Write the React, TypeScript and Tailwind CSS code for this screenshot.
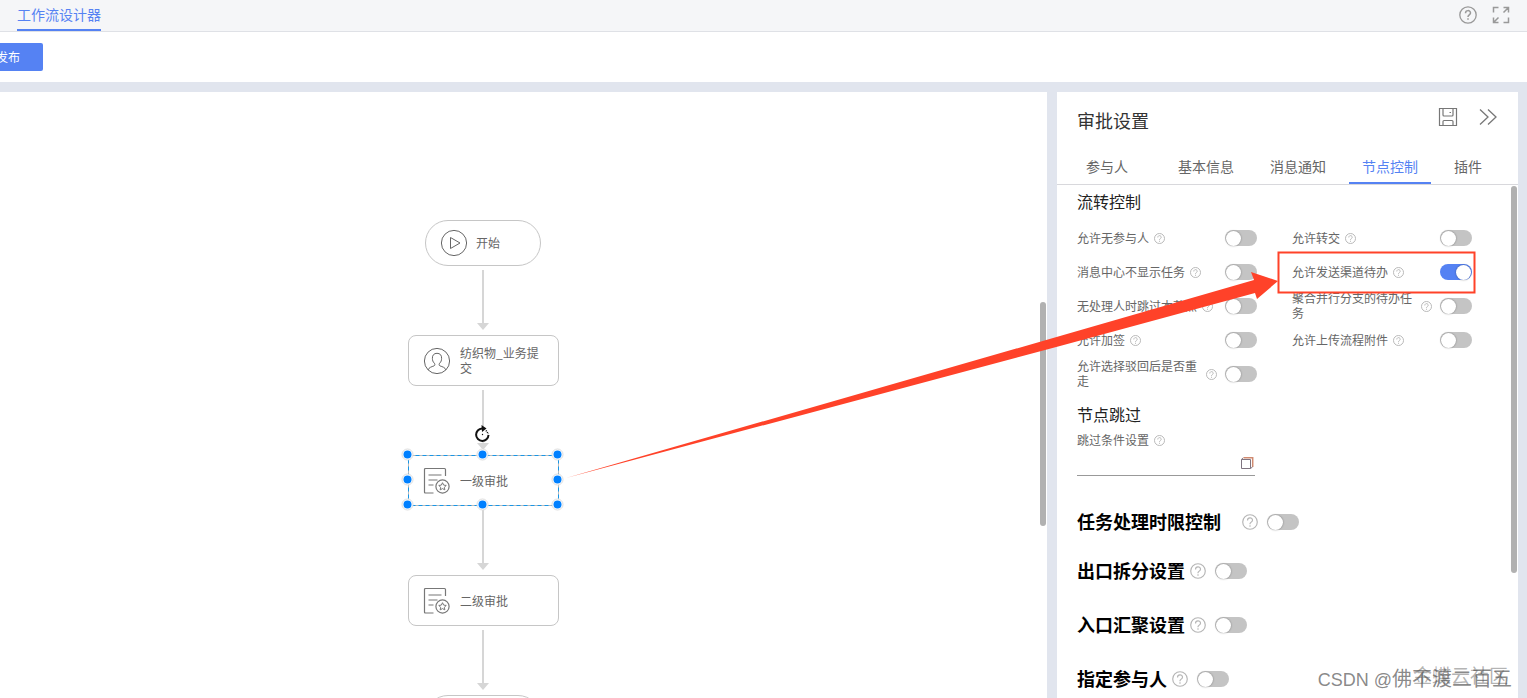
import type { ReactNode } from "react";

function HelpIcon({ large = false }: { large?: boolean }) {
  return (
    <svg
      viewBox="0 0 18 18"
      className={large ? "size-4 shrink-0 text-[#b5b5b5]" : "size-[11px] shrink-0 text-[#b3b3b3]"}
      fill="none"
      stroke="currentColor"
      strokeWidth={large ? 1.3 : 1.5}
      aria-hidden="true"
    >
      <circle cx="9" cy="9" r="8.2" />
      <path d="M6.200 7.300c0-4 5.600-4 5.600-.2 0 2-2.800 2.100-2.800 4v.4M9 12.700v1.700" />
    </svg>
  );
}

function Switch({ id, on = false }: { id: string; on?: boolean }) {
  return (
    <input
      id={id}
      type="checkbox"
      role="switch"
      defaultChecked={on}
      className="flex h-4 w-8 shrink-0 appearance-none items-center rounded-full bg-[#c4c4c4] px-px before:size-[15px] before:rounded-full before:bg-white before:shadow-[0_0_2px_rgba(0,0,0,0.4)] checked:justify-end checked:bg-[#5582f3]"
    />
  );
}

function Option({ id, label, on }: { id: string; label: string; on?: boolean }) {
  return (
    <div className="flex h-[34px] w-[180px] items-center gap-[5px]">
      <label htmlFor={id} className="max-w-[124px] pb-0.5 text-xs leading-[15px] text-[#666]">
        {label}
      </label>
      <HelpIcon />
      <div className="ml-auto flex">
        <Switch id={id} on={on} />
      </div>
    </div>
  );
}

function Group({ id, label, wide = false }: { id: string; label: string; wide?: boolean }) {
  return (
    <div className="flex h-[54px] items-center">
      <label
        htmlFor={id}
        className={wide ? "mr-[21px] pb-0.5 text-lg font-bold text-black" : "mr-[5px] pb-0.5 text-lg font-bold text-black"}
      >
        {label}
      </label>
      <HelpIcon large />
      <div className="ml-[9px] flex">
        <Switch id={id} />
      </div>
    </div>
  );
}

function PlayIcon() {
  return (
    <svg viewBox="0 0 28 28" className="size-7 shrink-0" fill="none" stroke="#666" aria-hidden="true">
      <circle cx="14" cy="14" r="12.6" />
      <path d="M10.500 8.500v11l9.500-5.500z" />
    </svg>
  );
}

function UserIcon() {
  return (
    <svg viewBox="0 0 28 28" className="size-7 shrink-0" fill="none" stroke="#666" aria-hidden="true">
      <circle cx="14" cy="14" r="12.6" />
      <path d="M5 23c1-2.600 3.500-3.200 6-4.100 1.200-.5 1-1.900.3-2.800C9.800 14.900 9.500 13.200 9.400 11.400 9.200 8.200 11 6.300 14 6.300s4.800 1.900 4.600 5.100c-.1 1.800-.4 3.500-1.900 4.700-.7.900-.9 2.300.3 2.800 2.500.9 5 1.500 6 4.100" />
    </svg>
  );
}

function ApproveIcon() {
  return (
    <svg viewBox="0 0 28 28" className="size-7 shrink-0" fill="none" stroke="#777" aria-hidden="true">
      <path d="M10.500 26H2.500q-1 0-1-1V2.500q0-1 1-1h19q1 0 1 1v6.500" strokeWidth="1.200" />
      <path d="M5.500 8h13M5.500 13h9M5.500 18h5" strokeWidth="1.200" />
      <circle cx="19.500" cy="19.500" r="6.600" strokeWidth="1.200" />
      <path d="M19.500 15.700l1.150 2.400 2.600.35-1.900 1.800.48 2.600-2.330-1.250-2.330 1.250.48-2.600-1.900-1.800 2.600-.35z" />
    </svg>
  );
}

function Task({ className, icon, children }: { className: string; icon: ReactNode; children: ReactNode }) {
  return (
    <div className={`absolute flex h-[51px] w-[151px] items-center gap-[9px] bg-white pl-3.5 text-xs leading-[15px] text-[#666] ${className}`}>
      {icon}
      <span className="w-20 pb-px">{children}</span>
    </div>
  );
}

const handles = [
  [407, 362],
  [482, 362],
  [557, 362],
  [407, 387],
  [557, 387],
  [407, 412],
  [482, 412],
  [557, 412],
];

function Canvas() {
  return (
    <main className="relative min-w-0 flex-1 overflow-hidden bg-white">
      <svg className="absolute left-0 top-0 h-[610px] w-[600px]" aria-hidden="true">
        <path d="M483 178v54M483 298v54M483 418v54M483 538v54" stroke="#d6d6d6" strokeWidth="2" />
        <path d="M477 231h12l-6 7zM477 351h12l-6 7zM477 471h12l-6 7zM477 591h12l-6 7z" fill="#d6d6d6" />
      </svg>

      <div className="absolute left-[425px] top-[128px] flex h-[46px] w-[116px] items-center gap-2 rounded-[23px] border border-[#c6c6c6] bg-white pl-3.5 text-xs text-[#666]">
        <PlayIcon />
        <span>开始</span>
      </div>
      <Task className="left-[408px] top-[243px] rounded-lg border border-[#c6c6c6]" icon={<UserIcon />}>
        纺织物_业务提交
      </Task>
      <Task className="left-[408px] top-[363px] border border-transparent" icon={<ApproveIcon />}>
        一级审批
      </Task>
      <Task className="left-[408px] top-[483px] rounded-lg border border-[#c6c6c6]" icon={<ApproveIcon />}>
        二级审批
      </Task>
      <div className="absolute left-[425px] top-[603px] h-[46px] w-[116px] rounded-[23px] border border-[#c6c6c6] bg-white" />

      <svg className="absolute left-0 top-0 h-[610px] w-[600px]" fill="none" aria-hidden="true">
        <rect x="408.5" y="363.5" width="150" height="50" stroke="#bbb" />
        <rect x="408.5" y="363.5" width="150" height="50" stroke="#1996e6" strokeDasharray="4 3" />
        {handles.map(([x, y]) => (
          <g key={`${x}-${y}`}>
            <circle cx={x + 0.5} cy={y + 0.5} r="5.5" fill="#fff" stroke="#ddd" />
            <circle cx={x + 0.5} cy={y + 0.5} r="4" fill="#0080ff" />
          </g>
        ))}
        <circle cx="482.5" cy="342.5" r="8" fill="#fff" />
        <path d="M482 336.500a6.200 6.200 0 1 0 6.500 6.500" stroke="#111" strokeWidth="2" />
        <path d="M481.500 333l5 3.500-4.500 3.500z" fill="#111" />
        <path d="M486 338.500l2.500 3.500" stroke="#111" strokeWidth="1.5" strokeDasharray="1 1" />
        <circle cx="482.5" cy="342.5" r="0.7" fill="#111" />
      </svg>

      <div className="absolute right-px top-[210px] h-[224px] w-1.5 rounded-full bg-[#b1b1b1]" />
    </main>
  );
}

const leftOptions = ["允许无参与人", "消息中心不显示任务", "无处理人时跳过本节点", "允许加签", "允许选择驳回后是否重走"];
const rightOptions = ["允许转交", "允许发送渠道待办", "聚合并行分支的待办任务", "允许上传流程附件"];

function Panel() {
  return (
    <aside className="relative flex w-[461px] shrink-0 flex-col overflow-hidden bg-white">
      <div className="flex h-[58px] shrink-0 items-center justify-between px-5">
        <h1 className="pb-0.5 text-lg text-[#333]">审批设置</h1>
        <div className="flex items-center gap-5 pb-2">
          <button type="button" aria-label="保存">
            <svg viewBox="0 0 20 20" className="size-5" fill="none" stroke="#777" strokeWidth="1.2">
              <path d="M1.500 1.500h17v17h-17zM5 1.500v6.500q0 1 1 1h8q1 0 1-1v-6.500M11.500 5.500h1.500M5 18.500v-4q0-1 1-1h8q1 0 1 1v4" />
            </svg>
          </button>
          <button type="button" aria-label="收起">
            <svg viewBox="0 0 20 20" className="size-5" fill="none" stroke="#777" strokeWidth="1.3">
              <path d="M2 2.500l8 7.500-8 7.500M10 2.500l8 7.500-8 7.500" />
            </svg>
          </button>
        </div>
      </div>
      <nav className="flex h-[35px] shrink-0 gap-2.5 border-b border-[#d8d8dc] pl-0.5 text-sm text-[#666]">
        <button type="button" className="w-24 shrink-0 pb-0.5">参与人</button>
        <button type="button" className="px-[13px] pb-0.5">基本信息</button>
        <button type="button" className="px-[13px] pb-0.5">消息通知</button>
        <button type="button" className="border-b-2 border-[#5582f3] px-[13px] text-[#5582f3]">节点控制</button>
        <button type="button" className="px-[13px] pb-0.5">插件</button>
      </nav>

      <div className="min-h-0 flex-1 overflow-hidden pl-5">
        <h2 className="h-9 text-base leading-8 text-[#222]">流转控制</h2>
        <div className="flex gap-[35px]">
          <div>
            {leftOptions.map((label, i) => (
              <Option key={label} id={`left-${i}`} label={label} />
            ))}
          </div>
          <div>
            {rightOptions.map((label, i) => (
              <Option key={label} id={`right-${i}`} label={label} on={i === 1} />
            ))}
          </div>
        </div>
        <h2 className="mt-[11px] text-base leading-6 text-[#222]">节点跳过</h2>
        <div className="mt-1 flex items-center gap-[5px]">
          <label htmlFor="skip" className="text-xs leading-5 text-[#666]">跳过条件设置</label>
          <HelpIcon />
        </div>
        <div className="flex h-[26px] w-[178px] items-center border-b border-[#999]">
          <input id="skip" type="text" className="min-w-0 flex-1 outline-none" />
          <button type="button" aria-label="选择条件" className="mr-px">
            <svg viewBox="0 0 14 14" className="size-3.5" fill="none" aria-hidden="true">
              <path d="M3.500 1.800h9.200v9.200" stroke="#d08a70" strokeWidth="1.500" />
              <path d="M1.500 3.500h9v9h-9zM1.500 3.500l1.500-1.700M10.500 12.500l2-1.500" stroke="#7f7480" />
            </svg>
          </button>
        </div>
        <div className="pt-[19px]">
          <Group id="deadline" label="任务处理时限控制" wide />
          <div className="-mt-[5px]">
            <Group id="split" label="出口拆分设置" />
            <Group id="merge" label="入口汇聚设置" />
            <Group id="assign" label="指定参与人" />
          </div>
        </div>
      </div>
      <div className="absolute right-px top-[94px] h-[387px] w-1.5 rounded-full bg-[#b1b1b1]" />
    </aside>
  );
}

export default function App() {
  return (
    <div className="relative flex h-screen flex-col overflow-hidden bg-white font-['Noto_Sans_CJK_SC','Liberation_Sans',sans-serif]">
      <header className="flex h-8 shrink-0 justify-between border-b border-[#dfe1e6] bg-[#f5f6f8] pl-[17px] pr-[17px]">
        <a href="#designer" className="border-b-2 border-[#5582f3] text-sm leading-[29px] text-[#5582f3]">
          工作流设计器
        </a>
        <div className="flex items-center gap-3.5 pb-px text-[#999]">
          <button type="button" aria-label="帮助">
            <svg viewBox="0 0 20 20" className="size-5" fill="none" stroke="currentColor" strokeWidth="1.3">
              <circle cx="10" cy="10" r="8.2" />
              <path d="M7.500 8.200c0-3.400 5-3.400 5-.2 0 1.800-2.500 1.900-2.500 3.700v.4M10 13.200v1.500" strokeWidth="1.500" />
            </svg>
          </button>
          <button type="button" aria-label="全屏">
            <svg viewBox="0 0 18 18" className="size-[18px]" fill="none" stroke="currentColor" strokeWidth="1.5">
              <path d="M1.500 6.500v-5h5M11.500 1.500h5v5M1.500 11.500v5h5M16.500 11.500v5h-5M16.500 1.500l-5 5M1.500 16.500l5-5" />
            </svg>
          </button>
        </div>
      </header>
      <div className="flex h-[50px] shrink-0 items-start pt-[11px]">
        <button type="button" className="-ml-[27px] h-7 w-[70px] rounded-xs bg-[#5582f3] text-xs text-white">发布</button>
      </div>
      <div className="flex min-h-0 flex-1 gap-2.5 bg-[#e1e5ee] pr-[9px] pt-2.5">
        <Canvas />
        <Panel />
      </div>

      <svg className="pointer-events-none absolute left-0 top-0 h-[698px] w-[1527px]" aria-hidden="true">
        <path d="M566 478L1060 336L1254 280L1251 272L1278 281L1257 299L1255 293L1060 346z" fill="#ff4229" />
        <rect x="1278.5" y="252.5" width="196" height="40" fill="none" stroke="#ff4229" strokeWidth="2" />
      </svg>
      <div className="pointer-events-none absolute bottom-[9px] right-[19px] text-[19px] leading-7 text-[#555]/45">金蝶云社区</div>
      <div className="pointer-events-none absolute bottom-[4px] right-[15px] text-xl leading-7 text-[#555]/70">
        <span className="font-['Liberation_Sans',sans-serif] text-lg">CSDN @</span>佛不渡二百五
      </div>
    </div>
  );
}
